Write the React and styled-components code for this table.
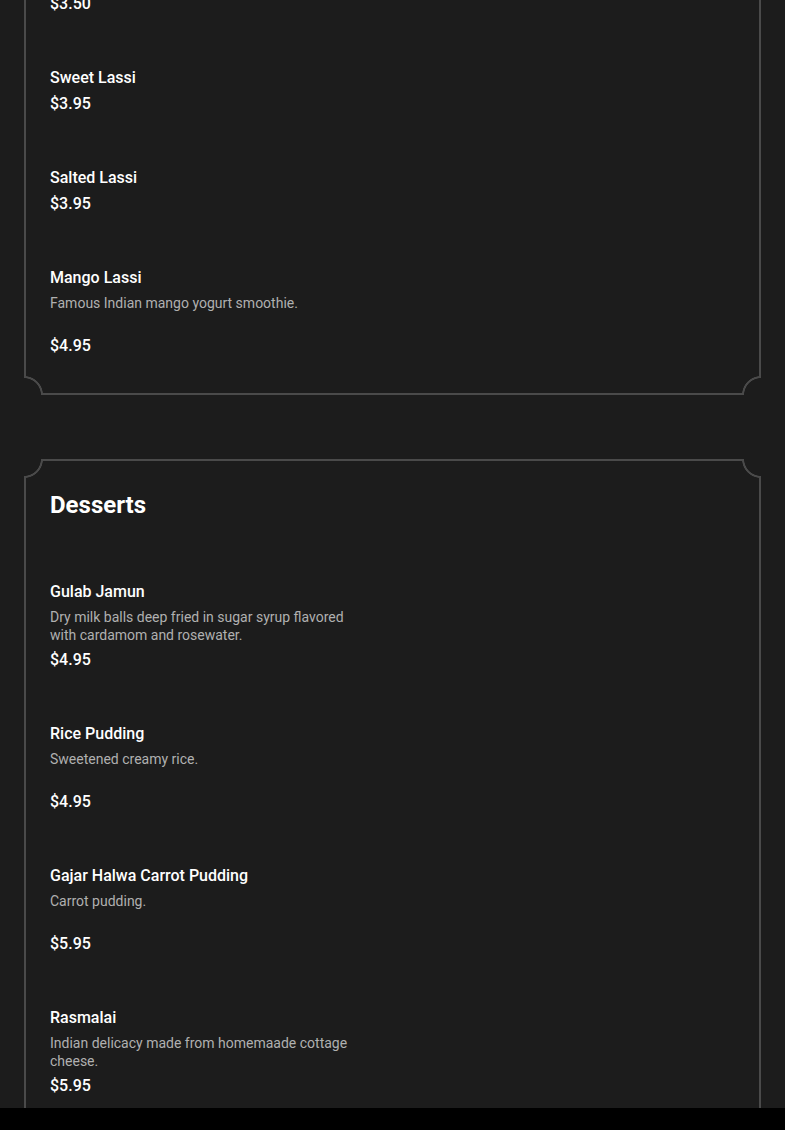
import React from 'react';
import styled, { createGlobalStyle } from 'styled-components';

const bg = '#1c1c1c';
const line = '#4a4a4a';

const GlobalStyle = createGlobalStyle`
  html, body {
    margin: 0;
    padding: 0;
    background: ${bg};
  }
  body {
    font-family: Roboto, "Liberation Sans", sans-serif;
    color: #ffffff;
    -webkit-font-smoothing: antialiased;
  }
  * {
    box-sizing: border-box;
  }
`;

const Screen = styled.div`
  height: 1130px;
  display: flex;
  flex-direction: column;
  overflow: hidden;
`;

const Viewport = styled.main`
  flex: 1;
  overflow: hidden;
  background: ${bg};
`;

const Stack = styled.div`
  margin-top: ${(p) => p.$offset}px;
  padding: 0 24px;
  display: flex;
  flex-direction: column;
  gap: 64px;
`;

const Card = styled.section`
  position: relative;
  border: 2px solid ${line};
  padding: 24px 24px 35px;
`;

const Corner = styled.span`
  position: absolute;
  width: 19px;
  height: 19px;
  ${(p) => (p.$v === 'top' ? 'top: -2px;' : 'bottom: -2px;')}
  ${(p) => (p.$h === 'left' ? 'left: -2px;' : 'right: -2px;')}
  background: radial-gradient(
    circle at ${(p) => p.$h} ${(p) => p.$v},
    ${bg} 16.6px,
    ${line} 17.2px,
    ${line} 18.6px,
    ${bg} 19.2px
  );
`;

const Heading = styled.h2`
  margin: 2px 0 57px;
  font-size: 24px;
  line-height: 36px;
  font-weight: 700;
`;

const List = styled.div`
  display: flex;
  flex-direction: column;
  gap: 50px;
`;

const Item = styled.div`
  display: flex;
  flex-direction: column;
`;

const Name = styled.div`
  font-size: 16px;
  line-height: 24px;
  font-weight: 500;
  margin-bottom: 2px;
`;

const Description = styled.p`
  margin: 3px 0 4px;
  max-width: 310px;
  min-height: 35px;
  font-size: 14px;
  line-height: 17.5px;
  color: #b0b0b0;
`;

const Price = styled.div`
  font-size: 16px;
  line-height: 24px;
  font-weight: 500;
`;

const BottomBar = styled.footer`
  height: 22px;
  flex: none;
  background: #000000;
`;

const drinks = [
  { price: '$3.50' },
  { name: 'Sweet Lassi', price: '$3.95' },
  { name: 'Salted Lassi', price: '$3.95' },
  {
    name: 'Mango Lassi',
    description: 'Famous Indian mango yogurt smoothie.',
    price: '$4.95',
  },
];

const desserts = [
  {
    name: 'Gulab Jamun',
    description:
      'Dry milk balls deep fried in sugar syrup flavored with cardamom and rosewater.',
    price: '$4.95',
  },
  { name: 'Rice Pudding', description: 'Sweetened creamy rice.', price: '$4.95' },
  { name: 'Gajar Halwa Carrot Pudding', description: 'Carrot pudding.', price: '$5.95' },
  {
    name: 'Rasmalai',
    description: 'Indian delicacy made from homemaade cottage cheese.',
    price: '$5.95',
  },
];

const Frame = () => (
  <>
    <Corner $v="top" $h="left" />
    <Corner $v="top" $h="right" />
    <Corner $v="bottom" $h="left" />
    <Corner $v="bottom" $h="right" />
  </>
);

const MenuItem = ({ name, description, price }) => (
  <Item>
    {name && <Name>{name}</Name>}
    {description && <Description>{description}</Description>}
    <Price>{price}</Price>
  </Item>
);

const MenuSection = ({ title, items }) => (
  <Card>
    <Frame />
    {title && <Heading>{title}</Heading>}
    <List>
      {items.map((item, i) => (
        <MenuItem key={i} {...item} />
      ))}
    </List>
  </Card>
);

export default function App() {
  return (
    <>
      <GlobalStyle />
      <Screen>
        <Viewport>
          <Stack $offset={-34}>
            <MenuSection items={drinks} />
            <MenuSection title="Desserts" items={desserts} />
          </Stack>
        </Viewport>
        <BottomBar />
      </Screen>
    </>
  );
}
